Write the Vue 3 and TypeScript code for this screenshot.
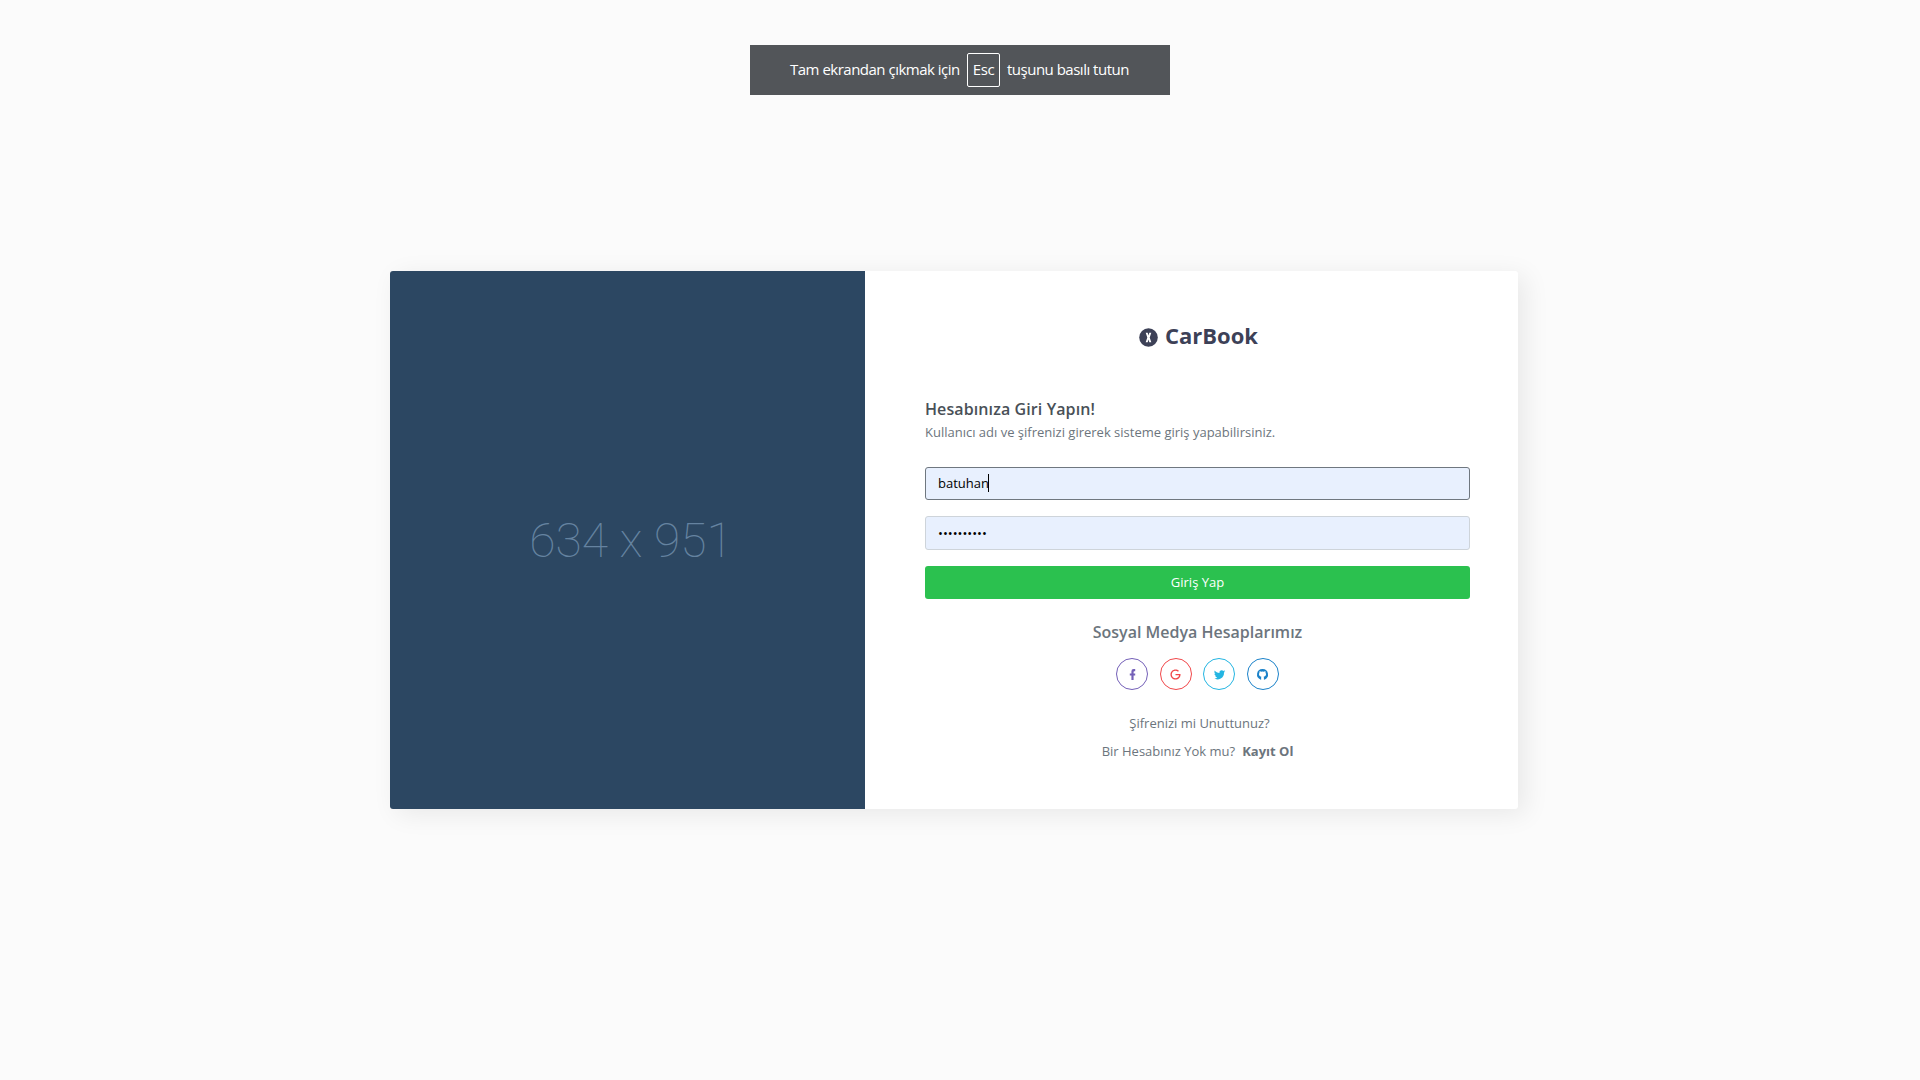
<script setup lang="ts">
import { ref } from 'vue'

interface Social {
  name: string
  color: string
  path: string
}

const username = ref<string>('batuhan')
const maskedPassword = ref<string>('•'.repeat(10))
const socials: Social[] = [
  {
    name: 'facebook',
    color: '#7460b8',
    path: 'M17 2v4h-2c-.7 0-1 .8-1 1.500V10h3v4h-3v8h-4v-8H7v-4h3V6a4 4 0 0 1 4-4z',
  },
  {
    name: 'google',
    color: '#f1474a',
    path: 'M23 12c0 6.200-4.200 11-11 11C5.900 23 1 18.100 1 12S5.900 1 12 1c3 0 5.500 1.100 7.500 2.900l-2 2C15.900 4.500 14.200 3.800 12 3.800c-4.500 0-8.100 3.700-8.100 8.200s3.600 8.200 8.100 8.200c4.300 0 7.200-2.500 7.800-6.300H12v-2.800h10.900c.1.300.1.600.1.900z',
  },
  {
    name: 'twitter',
    color: '#23b5e2',
    path: 'M22.500 6c-.8.300-1.600.6-2.500.7.900-.5 1.600-1.400 1.900-2.400-.8.500-1.800.9-2.700 1.100A4.300 4.300 0 0 0 11.900 9.300C8.300 9.100 5.200 7.400 3.100 4.800a4.300 4.300 0 0 0 1.300 5.700c-.7 0-1.400-.2-1.900-.5 0 2.100 1.500 3.900 3.400 4.300-.6.200-1.300.2-1.900.1a4.300 4.300 0 0 0 4 3A8.600 8.600 0 0 1 1.600 19.100 12.100 12.100 0 0 0 20.300 8.300c.9-.6 1.600-1.400 2.200-2.300z',
  },
  {
    name: 'github',
    color: '#1b82c9',
    path: 'M12 2a10 10 0 0 0-3.200 19.500c.5.100.7-.2.700-.5v-3.100c0-.8.200-1.300.6-1.600-2.300-.3-4.600-1.200-4.600-5 0-1.100.4-2 1-2.700-.1-.3-.5-1.300.1-2.700 0 0 .8-.3 2.700 1a9.600 9.600 0 0 1 5.400 0c1.900-1.300 2.700-1 2.700-1 .6 1.400.2 2.400.1 2.700.6.700 1 1.600 1 2.700 0 3.900-2.300 4.700-4.600 5 .4.300.7.900.7 1.900V21c0 .3.200.6.700.5A10 10 0 0 0 12 2z',
  },
]
</script>

<template>
  <div class="page">
    <div class="notice">
      <span class="before">Tam ekrandan çıkmak için</span>
      <kbd>Esc</kbd>
      <span class="after">tuşunu basılı tutun</span>
    </div>
    <main class="card">
      <div class="placeholder"><span>634 x 951</span></div>
      <section class="panel">
        <div class="brand">
          <svg width="19" height="19" viewBox="0 0 19 19">
            <circle cx="9.500" cy="9.500" r="9.300" fill="#3d4157" />
            <path d="M6.700 4.800h2l.8 2.700.8-2.700h2l-1.600 4.700 1.600 4.700h-2l-.8-2.700-.8 2.700h-2l1.600-4.700z" fill="#fff" />
          </svg>
          <span>CarBook</span>
        </div>
        <h1>Hesabınıza Giri Yapın!</h1>
        <p class="hint">Kullanıcı adı ve şifrenizi girerek sisteme giriş yapabilirsiniz.</p>
        <form @submit.prevent>
          <div class="field focused"><span>{{ username }}</span><i class="caret"></i></div>
          <div class="field secret"><span>{{ maskedPassword }}</span></div>
          <button type="submit">Giriş Yap</button>
        </form>
        <h2>Sosyal Medya Hesaplarımız</h2>
        <div class="socials">
          <a v-for="s in socials" :key="s.name" :class="s.name" :style="{ color: s.color }">
            <svg viewBox="0 0 24 24"><path :d="s.path" fill="currentColor" /></svg>
          </a>
        </div>
        <p class="link forgot">Şifrenizi mi Unuttunuz?</p>
        <p class="link signup">Bir Hesabınız Yok mu?<b>Kayıt Ol</b></p>
      </section>
    </main>
  </div>
</template>

<style>
body {
  background: #fbfbfb;
}
</style>

<style scoped>
.page {
  box-sizing: border-box;
  width: 1920px;
  height: 1080px;
  padding-top: 45px;
  overflow: hidden;
  background: #fbfbfb;
  font-family: "Open Sans", sans-serif;
  font-size: 13px;
  color: #6c757d;
}
.notice {
  box-sizing: border-box;
  display: flex;
  align-items: center;
  width: 420px;
  height: 50px;
  margin: 0 auto;
  padding-left: 40px;
  background: #525559;
  color: #fff;
  font-size: 15px;
  white-space: nowrap;
}
.before,
.after {
  padding-bottom: 2px;
  letter-spacing: -0.5px;
}
.before {
  width: 177px;
}
kbd {
  box-sizing: border-box;
  width: 33px;
  height: 34px;
  border: 1px solid #fff;
  border-radius: 2px;
  font: inherit;
  line-height: 30px;
  text-align: center;
  letter-spacing: -0.4px;
}
.after {
  margin-left: 7px;
}
.card {
  display: flex;
  width: 1128px;
  height: 538px;
  margin: 176px 0 0 390px;
  border-radius: 3px;
  background: #fff;
  box-shadow: 7px 5px 26px rgba(0, 0, 0, 0.08);
  overflow: hidden;
}
.placeholder {
  box-sizing: border-box;
  display: flex;
  align-items: center;
  justify-content: center;
  width: 475px;
  padding-left: 7px;
  background: #2c4762;
  color: #6583a0;
  font-family: Roboto, sans-serif;
  font-size: 48px;
  font-weight: 100;
  white-space: nowrap;
}
.panel {
  width: 545px;
  padding: 48px 48px 0 60px;
}
.brand {
  display: flex;
  align-items: center;
  justify-content: center;
  height: 34px;
  padding-left: 2px;
  color: #3d4157;
  font-size: 22px;
  font-weight: 700;
}
.brand svg {
  margin: 3px 7px 0 0;
}
.brand span {
  padding-bottom: 2px;
}
h1,
h2,
p {
  margin: 0;
  white-space: nowrap;
}
h1 {
  margin-top: 44px;
  color: #495057;
  font-size: 16px;
  font-weight: 600;
  line-height: 24px;
  letter-spacing: 0.1px;
}
.hint {
  line-height: 20px;
  margin-top: 1px;
}
form {
  margin-top: 25px;
}
.field {
  box-sizing: border-box;
  display: flex;
  align-items: center;
  height: 33px;
  padding-left: 12px;
  border: 1px solid #ced4da;
  border-radius: 3px;
  background: #e8f0fe;
  color: #000;
}
.field.focused {
  border-color: #6f777f;
}
.focused span {
  padding-bottom: 2px;
}
.caret {
  width: 1px;
  height: 18px;
  margin: 0 0 2px -1px;
  background: #000;
}
.secret {
  height: 34px;
  margin: 16px 0;
}
button {
  display: block;
  width: 100%;
  height: 33px;
  padding: 0 0 2px;
  border: 0;
  border-radius: 3px;
  background: #2bc14f;
  color: #fff;
  font: inherit;
}
h2 {
  margin-top: 21px;
  font-size: 16px;
  font-weight: 600;
  line-height: 24px;
  text-align: center;
}
.socials {
  display: flex;
  justify-content: center;
  gap: 11.67px;
  margin-top: 14px;
}
.socials a {
  box-sizing: border-box;
  display: flex;
  align-items: center;
  justify-content: center;
  width: 32px;
  height: 32px;
  border: 1px solid currentColor;
  border-radius: 50%;
}
.socials svg {
  width: 13px;
  height: 13px;
  margin: 1px 0 0 1px;
}
.socials .google svg {
  width: 11px;
  height: 11px;
  margin-left: 0;
}
.socials .github svg {
  margin-left: 0;
}
.link {
  margin-top: 23px;
  line-height: 20px;
  text-align: center;
}
.forgot {
  padding-left: 4px;
}
.signup {
  margin-top: 8px;
}
.signup b {
  margin-left: 7px;
}
</style>
